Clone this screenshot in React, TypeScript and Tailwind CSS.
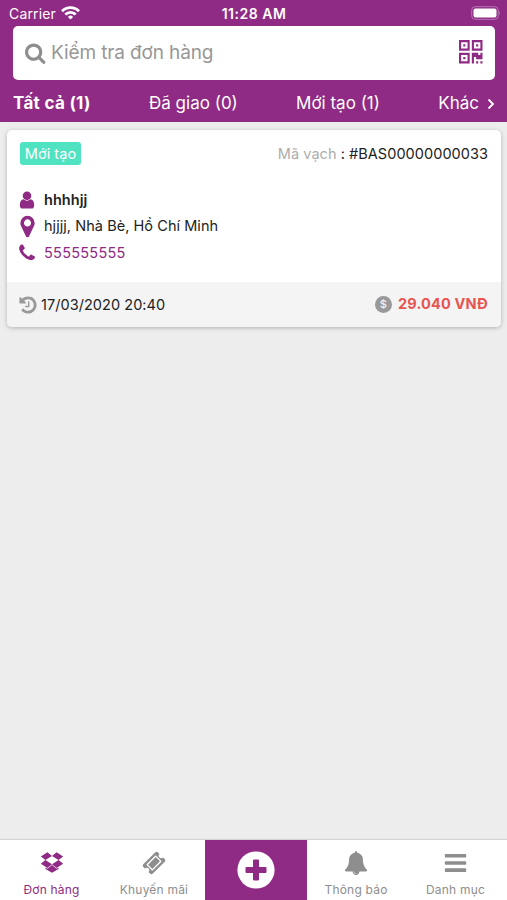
import type { ReactNode } from "react";

const tabs = ["Đã giao (0)", "Mới tạo (1)"];

const paths = {
  search:
    "M1152 832q0-185-131.5-316.5t-316.5-131.5-316.5 131.5-131.5 316.5 131.5 316.5 316.5 131.5 316.5-131.5 131.5-316.5zm512 832q0 52-38 90t-90 38q-54 0-90-38l-343-342q-179 124-399 124-143 0-273.5-55.5t-225-150-150-225-55.5-273.5 55.5-273.5 150-225 225-150 273.5-55.5 273.5 55.5 225 150 150 225 55.5 273.5q0 220-124 399l343 343q37 37 37 90z",
  user: "M1536 1399q0 109-62.5 187t-150.5 78h-854q-88 0-150.5-78t-62.5-187q0-85 8.5-160.5t31.5-152 58.5-131 94-89 134.5-34.5q131 128 313 128t313-128q76 0 134.5 34.5t94 89 58.5 131 31.5 152 8.5 160.5zm-256-887q0 159-112.5 271.5t-271.5 112.5-271.5-112.5-112.5-271.5 112.5-271.5 271.5-112.5 271.5 112.5 112.5 271.5z",
  marker:
    "M1152 640q0-106-75-181t-181-75-181 75-75 181 75 181 181 75 181-75 75-181zm256 0q0 109-33 179l-364 774q-16 33-47.5 52t-67.5 19-67.5-19-46.5-52l-365-774q-33-70-33-179 0-212 150-362t362-150 362 150 150 362z",
  phone:
    "M1600 1240q0 27-10 70.5t-21 68.5q-21 50-122 106-94 51-186 51-27 0-53-3.5t-57.5-12.5-47-14.5-55.5-20.5-49-18q-98-35-175-83-127-79-264-216t-216-264q-48-77-83-175-3-9-18-49t-20.5-55.5-14.5-47-12.5-57.5-3.5-53q0-92 51-186 56-101 106-122 25-11 68.5-21t70.5-10q14 0 21 3 18 6 53 76 11 19 30 54t35 63.5 31 53.5q3 4 17.5 25t21.5 35.5 7 28.5q0 20-28.5 50t-62 55-62 53-28.5 46q0 9 5 22.5t8.5 20.5 14 24 11.5 19q76 137 174 235t235 174q2 1 19 11.5t24 14 20.5 8.5 22.5 5q18 0 46-28.5t53-62 55-62 50-28.5q14 0 28.5 7t35.5 21.5 25 17.5q25 15 53.5 31t63.5 35 54 30q70 35 76 53 3 7 3 21z",
  history:
    "M1664 896q0 156-61 298t-164 245-245 164-298 61q-172 0-327-72.5t-264-204.5q-7-10-6.5-22.5t8.5-20.5l137-138q10-9 25-9 16 2 23 12 73 95 179 147t225 52q104 0 198.5-40.5t163.5-109.5 109.5-163.5 40.5-198.5-40.5-198.5-109.5-163.5-163.5-109.5-198.5-40.5q-98 0-188 35.5t-160 101.5l137 138q31 30 14 69-17 40-59 40h-448q-26 0-45-19t-19-45v-448q0-42 40-59 39-17 69 14l130 129q107-101 244.5-156.5t284.5-55.5q156 0 298 61t245 164 164 245 61 298zm-640-288v448q0 14-9 23t-23 9h-320q-14 0-23-9t-9-23v-64q0-14 9-23t23-9h224v-352q0-14 9-23t23-9h64q14 0 23 9t9 23z",
  dropbox:
    "M402 750l494 305-342 285-490-319zM1388 1305v108l-490 293-2 1-490-294v-108l147 96 343-286 345 286zM554 160l342 285-494 305-338-271zM1390 750l338 271-489 319-343-285zM1239 160l489 319-338 271-494-305z",
  ticket:
    "M1024 452l316 316-572 572-316-316zm-211 979l618-618q19-19 19-45t-19-45l-362-362q-18-18-45-18t-45 18l-618 618q-19 19-19 45t19 45l362 362q18 18 45 18t45-18zm889-637l-907 908q-37 37-90.5 37t-90.5-37l-126-126q56-56 56-136t-56-136-136-56-136 56l-125-126q-37-37-37-90.5t37-90.5l907-906q37-37 90.5-37t90.5 37l125 125q-56 56-56 136t56 136 136 56 136-56l126 125q37 37 37 90.5t-37 90.5z",
  bell: "M912 1696q0-16-16-16-59 0-101.5-42.5t-42.5-101.5q0-16-16-16t-16 16q0 73 51.5 124.5t124.5 51.5q16 0 16-16zm816-288q0 52-38 90t-90 38h-448q0 106-75 181t-181 75-181-75-75-181h-448q-52 0-90-38t-38-90q50-42 91-88t85-119.5 74.5-158.5 50-206 19.5-260q0-152 117-282.5t307-158.5q-8-19-8-39 0-40 28-68t68-28 68 28 28 68q0 20-8 39 190 28 307 158.5t117 282.5q0 139 19.5 260t50 206 74.5 158.5 85 119.5 91 88z",
  bars: "M192 288h1408q64 0 64 64v128q0 64-64 64h-1408q-64 0-64-64v-128q0-64 64-64zM192 800h1408q64 0 64 64v128q0 64-64 64h-1408q-64 0-64-64v-128q0-64 64-64zM192 1312h1408q64 0 64 64v128q0 64-64 64h-1408q-64 0-64-64v-128q0-64 64-64z",
};

function Icon({ name, className }: { name: keyof typeof paths; className: string }) {
  return (
    <svg viewBox="0 0 1792 1792" fill="currentColor" className={`shrink-0 ${className}`}>
      <path d={paths[name]} />
    </svg>
  );
}

function QrIcon() {
  return (
    <svg viewBox="0 0 11 11" fill="#8f2a85" fillRule="evenodd" className="mb-[2px] h-[23.5px] w-[23.5px]">
      <path d="M0 0h5v5h-5zM1 1v3h3v-3zM2 2h1v1h-1z" />
      <path d="M6 0h5v5h-5zM7 1v3h3v-3zM8 2h1v1h-1z" />
      <path d="M0 6h5v5h-5zM1 7v3h3v-3zM2 8h1v1h-1z" />
      <path d="M6 6h3v1h1v-1h1v3h-3v-1h-1v3h-1zM8 10h1v1h-1zM10 10h1v1h-1z" />
    </svg>
  );
}

function StatusBar() {
  return (
    <div className="flex h-[27px] items-center justify-between pr-[6px] pl-[9px] text-sm">
      <div className="flex w-[120px] items-center gap-[5px]">
        <span className="text-[14px] tracking-[0.15px]">Carrier</span>
        <svg viewBox="0 0 19 14" className="mb-[1px] h-[14px] w-[19px]" fill="none" stroke="white" strokeWidth="2.8">
          <path d="M1 5.2a12 12 0 0 1 17 0" />
          <path d="M4.3 8.6a7.3 7.3 0 0 1 10.4 0" />
          <path d="M9.5 13.6l-2.6-2.7a3.7 3.7 0 0 1 5.2 0z" fill="white" stroke="none" />
        </svg>
      </div>
      <span className="mr-[2px] text-[14px] font-semibold tracking-[0.5px]">11:28 AM</span>
      <div className="flex w-[120px] justify-end">
        <svg viewBox="0 0 30 14" className="mb-[1px] h-[14px] w-[30px]">
          <rect x="0.7" y="0.7" width="26.5" height="12.6" rx="3.5" fill="none" stroke="#b674b0" strokeWidth="1" />
          <rect x="2.5" y="2.5" width="23" height="9" rx="2" fill="white" />
          <path d="M28.3 4.8q1.6 2.2 0 4.4z" fill="#c68fc1" />
        </svg>
      </div>
    </div>
  );
}

function InfoRow({ icon, children }: { icon: ReactNode; children: ReactNode }) {
  return (
    <div className="flex h-[26.5px] items-center">
      <span className="-ml-[2px] flex w-[18px] justify-center text-[#8f2a85]">{icon}</span>
      <span className="ml-[8px]">{children}</span>
    </div>
  );
}

function NavItem({ icon, label, className }: { icon: ReactNode; label: string; className: string }) {
  return (
    <div className={`flex flex-col items-center pt-[10px] text-[12px] leading-4 tracking-[0.2px] ${className}`}>
      <span className="flex h-[25px] items-center">{icon}</span>
      <span className="mt-[7px] whitespace-nowrap">{label}</span>
    </div>
  );
}

export default function App() {
  return (
    <div className="flex h-[900px] w-[507px] flex-col bg-[#ededed] font-['Inter',sans-serif] text-[#222]">
      <header className="h-[122px] bg-[#8f2a85] text-white">
        <StatusBar />
        <div className="-mt-[1px] mr-[12px] ml-[13px] flex h-[54px] items-center rounded-[5px] bg-white pr-[12.5px] pl-[12px]">
          <Icon name="search" className="h-[22px] w-[22px] text-[#8e8e8e]" />
          <span className="ml-[4px] flex-1 text-[19px] tracking-[-0.12px] text-[#979797]">Kiểm tra đơn hàng</span>
          <QrIcon />
        </div>
        <nav className="flex h-[42px] items-center justify-between pt-[6px] pr-[12px] pl-[13px] text-[17px]">
          <span className="font-bold tracking-[0.3px]">Tất cả (1)</span>
          {tabs.map((tab) => (
            <span key={tab}>{tab}</span>
          ))}
          <span className="flex items-center gap-[8px]">
            Khác
            <svg viewBox="0 0 8 12" className="h-3 w-2" fill="none" stroke="white" strokeWidth="1.8">
              <path d="M1.5 1.5L6 6l-4.5 4.5" />
            </svg>
          </span>
        </nav>
      </header>

      <main className="flex-1 px-[7px] pt-[8px]">
        <div className="mr-[-1px] h-[197px] overflow-hidden rounded-[5px] bg-white text-[14.5px] tracking-[0.05px] shadow-[0_1px_4px_rgba(0,0,0,0.25)]">
          <div className="h-[152px] px-[13px] pt-[12px]">
            <div className="flex h-[23px] items-center justify-between">
              <span className="flex h-[23px] w-[61px] items-center justify-center rounded-[3px] bg-[#50e3c2] text-white">
                Mới tạo
              </span>
              <span>
                <span className="text-[#adadad]">Mã vạch</span> : #BAS00000000033
              </span>
            </div>
            <div className="mt-[21.6px]">
              <InfoRow icon={<Icon name="user" className="h-[20px] w-[20px]" />}>
                <span className="font-semibold">hhhhjj</span>
              </InfoRow>
              <InfoRow icon={<Icon name="marker" className="h-[25px] w-[25px]" />}>hjjjj, Nhà Bè, Hồ Chí Minh</InfoRow>
              <InfoRow icon={<Icon name="phone" className="h-[20px] w-[20px]" />}>
                <span className="tracking-[0.25px] text-[#8f2a85]">555555555</span>
              </InfoRow>
            </div>
          </div>
          <div className="flex h-[45px] items-center justify-between bg-[#f4f4f4] px-[13px]">
            <span className="flex items-center gap-[4px]">
              <Icon name="history" className="-mr-[1px] -ml-[2px] h-[20px] w-[20px] text-[#999]" />
              17/03/2020 20:40
            </span>
            <span className="flex items-center gap-[6px] pb-[1px] font-bold tracking-[0.18px] text-[#e85450]">
              <span className="flex h-[17px] w-[17px] items-center justify-center rounded-full bg-[#999] text-[11px] font-medium text-[#f4f4f4]">
                $
              </span>
              29.040 VNĐ
            </span>
          </div>
        </div>
      </main>

      <footer className="flex h-[60px] bg-white text-[#8e8e8e] shadow-[0_-1px_1px_rgba(0,0,0,0.1)]">
        <NavItem className="w-[103px] text-[#8f2a85]" label="Đơn hàng" icon={<Icon name="dropbox" className="mb-[1px] h-[24px] w-[24px]" />} />
        <NavItem className="w-[102px]" label="Khuyến mãi" icon={<Icon name="ticket" className="h-[24px] w-[24px]" />} />
        <div className="flex w-[102px] items-center justify-center bg-[#8f2a85]">
          <svg viewBox="0 0 38 38" className="mb-[1px] h-[38px] w-[38px]">
            <circle cx="19" cy="19" r="18.6" fill="white" />
            <path
              d="M17 8.5h4q1 0 1 1v6.5h6.500q1 0 1 1v4q0 1-1 1h-6.500v6.500q0 1-1 1h-4q-1 0-1-1v-6.500h-6.500q-1 0-1-1v-4q0-1 1-1h6.500v-6.500q0-1 1-1z"
              fill="#8f2a85"
            />
          </svg>
        </div>
        <NavItem className="w-[98px]" label="Thông báo" icon={<Icon name="bell" className="h-[24px] w-[24px]" />} />
        <NavItem className="w-[101px]" label="Danh mục" icon={<Icon name="bars" className="h-[25px] w-[25px]" />} />
      </footer>
    </div>
  );
}
